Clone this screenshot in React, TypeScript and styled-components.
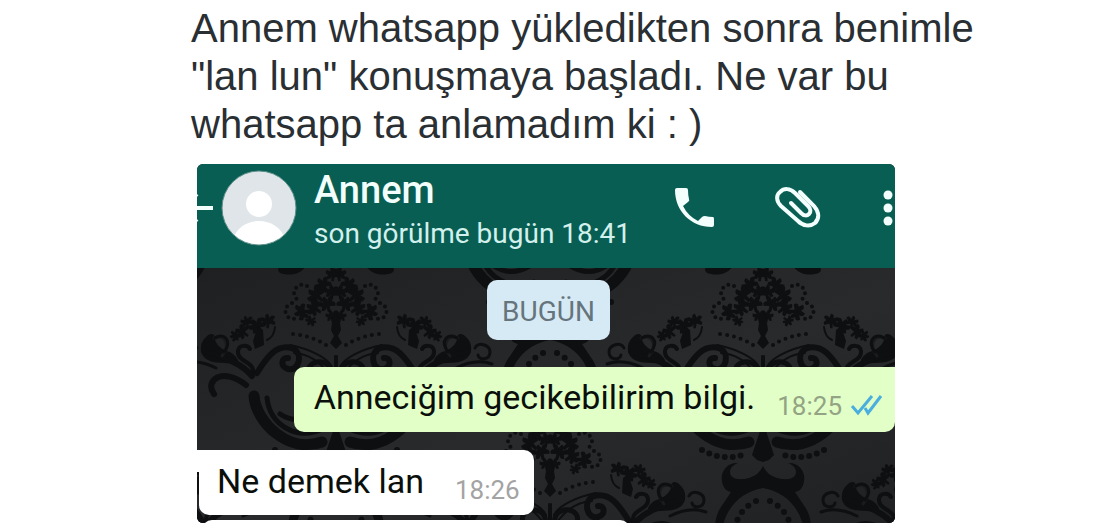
import React from 'react';
import styled, { createGlobalStyle } from 'styled-components';

const GlobalStyle = createGlobalStyle`
  *, *::before, *::after { box-sizing: border-box; }
  body { margin: 0; background: #fff; font-family: Roboto, "Noto Sans", sans-serif; }
`;

const Post = styled.article`
  max-width: 1000px;
  padding: 4px 24px 5px 191px;
`;

const Caption = styled.p`
  margin: 0 0 16px;
  max-width: 784px;
  color: #292f33;
  font: 40px/48px "Liberation Sans", Arial, sans-serif;
`;

const Chat = styled.section`
  position: relative;
  margin-left: 6px;
  max-width: 698px;
  overflow: hidden;
  border-radius: 6px;
  background: #232426;
`;

const Header = styled.header`
  position: relative;
  display: flex;
  align-items: flex-start;
  height: 104px;
  padding-top: 6px;
  background: #095e54;
  color: #f2fffc;
`;

const IconButton = styled.button<{ $width: number }>`
  flex: none;
  width: ${(p) => p.$width}px;
  height: 76px;
  padding: 0;
  border: 0;
  background: none;
  color: inherit;
  svg { display: block; }
`;

const Avatar = styled.svg`
  flex: none;
  width: 76px;
  height: 76px;
`;

const Contact = styled.div`
  flex: 1;
  padding-left: 17px;
  white-space: nowrap;
`;

const Name = styled.h1`
  margin: 0;
  font-size: 38px;
  line-height: 40px;
  font-weight: 500;
`;

const Seen = styled.p`
  margin: 4px 0 0;
  font-size: 28px;
  line-height: 40px;
  color: #d3f1ec;
`;

const Messages = styled.div`
  position: relative;
  height: 255px;
  padding-top: 12px;
  display: flex;
  flex-direction: column;
  overflow: hidden;
`;

const Wallpaper = styled.svg`
  position: absolute;
  top: 0;
  left: 0;
`;

const DayLabel = styled.div`
  position: relative;
  align-self: center;
  height: 60px;
  margin: 0 0 27px 5px;
  padding: 0 15px;
  border-radius: 10px;
  background: #d6eaf6;
  color: #66747c;
  font-size: 28px;
  line-height: 64px;
`;

const Bubble = styled.div`
  position: relative;
  flex: none;
  display: flex;
  align-items: baseline;
  height: 65px;
  color: #0b0f0b;
  font-size: 34px;
  line-height: 60px;
  white-space: nowrap;
`;

const SentBubble = styled(Bubble)`
  align-self: flex-end;
  margin-bottom: 18px;
  padding: 0 12px 0 20px;
  border-radius: 10px 0 10px 10px;
  background: #e1ffc7;
`;

const ReceivedBubble = styled(Bubble)`
  align-self: flex-start;
  margin: 0 0 5px 2px;
  padding: 0 14px 0 18px;
  border-radius: 0 10px 10px 10px;
  background: #fff;
  line-height: 62px;

  &::before {
    content: '';
    position: absolute;
    top: 0;
    left: -2px;
    width: 2px;
    height: 22px;
    background: #fff;
  }
`;

const Time = styled.time<{ $sent?: boolean }>`
  position: relative;
  top: 6px;
  margin-left: ${(p) => (p.$sent ? 22 : 31)}px;
  color: ${(p) => (p.$sent ? '#93a384' : '#a3a3a3')};
  font-size: 26px;
`;

const Ticks = styled.svg`
  align-self: flex-start;
  margin: 26px 0 0 8px;
`;

const NextBubble = styled.div`
  position: relative;
  flex: none;
  width: 428px;
  height: 20px;
  margin-left: 5px;
  border-radius: 10px;
  background: #fff;
`;

/* Leaf sprigs of the bouquet and of the side flower: x, y, rotation, size. */
const sprigs = [
  [3, 6, 0, 8], [13, 17, 30, 9], [4, 24, 0, 8], [20, 27, 50, 10],
  [9, 36, 20, 9], [34, 44, 100, 9], [22, 40, 60, 9], [25, 53, 130, 6], [4, 48, 10, 7],
  [68, 53, 0, 8], [79, 58, 30, 9], [89, 54, 10, 7], [94, 64, 60, 8], [101, 68, 90, 6],
];

/* One half of the damask ornament; the other half is its mirror image. */
const HalfOrnament = () => (
  <g>
    <g fill="#0e0f11">
      {sprigs.map(([x, y, turn, size]) => (
        <use key={`${x} ${y}`} href="#sprig" transform={`translate(${x} ${y}) rotate(${turn}) scale(${size / 10})`} />
      ))}
      <path d="M0 48h3l2 14-3 6 4 7-6 6zM73 62l5-4 5 15-2 8-9-4zM30-3c8 0 14 4 24 0 6 3 5 8-2 9-8 2-19-1-22-9z" />
      <path d="M98 92c6-12 17-6 23-20-1-7 5-8 9-3 7 6 7 17 0 22-9 6-19 2-32 6z" />
      <path d="M0 163h3l8 24-5 5-6 2z" />
      <path d="M0 198q4 9 14 12c12 3 19 0 19-6 0-4-3-7-8-9 10-1 18 8 16 18-1 7-4 10-9 11l8 12c7 9 9 19 8 35l-6 1C41 244 26 225 0 220z" />
    </g>
    <g fill="none" stroke="#0e0f11" strokeLinecap="round">
      <path d="M29 18c6-4 13 1 13 8q-1 5-7 8M44 35c7 3 8 8 5 13q-5 5-12 1" strokeWidth="4" strokeDasharray="0 6" />
      <path d="M10 77Q24 68 43 66" strokeWidth="4" strokeDasharray="0 7" />
      <path d="M4 99C8 90 26 81 46 77M1 106V88M7 106Q22 86 42 85M61 59Q62 69 69 72" strokeWidth="2" />
      <path d="M5 108C2 95 19 89 26 98c6 9-7 17-11 9" strokeWidth="5" />
      <path d="M79 105C69 89 60 76 44 80 32 85 37 104 48 101c8-2 7-12 0-11" strokeWidth="6" />
      <path d="M83 104c-1-11 16-10 15-21-1-7-10-6-12-2" strokeWidth="4" />
      <path d="M84 108C96 94 112 90 132 83M90 117C114 98 132 113 122 126" strokeWidth="6" />
      <path d="M114 88c-9-11-3-22 8-18" strokeWidth="3" stroke="#1a1b1d" />
      <path d="M112 84c-9-12 1-20 9-14M139 80c3-7 15-3 15 4 0 8-11 9-12 3M156 96q-16-6-36 4" strokeWidth="3" />
      <path d="M61 182Q40 194 17 186" strokeWidth="6" strokeDasharray="0 8" />
      <path d="M82 128C80 154 48 186 14 174" strokeWidth="11" />
      <path d="M69 130C66 158 38 172 16 162" strokeWidth="5" />
      <path d="M56 146Q38 158 17 144" strokeWidth="5" />
      <path d="M7 233Q24 241 28 260" strokeWidth="6" strokeDasharray="0 9" />
    </g>
  </g>
);

const columns = [
  [139, 0], [566, 0],
  [-74, 148], [353, 148], [780, 148],
  [-74, -148], [353, -148], [780, -148],
];

const Damask = () => (
  <Wallpaper width="698" height="255" viewBox="0 0 698 255" aria-hidden="true">
    <defs>
      <linearGradient id="shade" x2="1" y2="1">
        <stop stopColor="#1f2022" />
        <stop offset=".55" stopColor="#282a2c" />
        <stop offset="1" stopColor="#202123" />
      </linearGradient>
      <path id="sprig" d="M-1 9L-2 3-8 5Q-11 1-6-1L-9-5Q-5-9-2-4L0-9Q5-8 3-3L8-5Q11 0 6 1L8 5Q4 8 2 3V9Z" />
      <g id="half"><HalfOrnament /></g>
      <g id="ornament">
        <use href="#half" />
        <use href="#half" transform="scale(-1 1)" />
      </g>
    </defs>
    <rect width="698" height="255" fill="url(#shade)" />
    {columns.map(([x, y]) => (
      <use key={`${x} ${y}`} href="#ornament" x={x} y={y} />
    ))}
  </Wallpaper>
);

export default function App() {
  return (
    <>
      <GlobalStyle />
      <Post>
        <Caption>
          Annem whatsapp yükledikten sonra benimle "lan lun" konuşmaya başladı. Ne var bu whatsapp ta anlamadım ki : )
        </Caption>
        <Chat>
          <Header>
            <IconButton $width={24} aria-label="Geri">
              <svg width="24" height="76" fill="none" stroke="currentColor" strokeWidth="4">
                <path d="M16 38H-10M0 24L-14 38L0 52" />
              </svg>
            </IconButton>
            <Avatar viewBox="0 0 76 76" aria-hidden="true">
              <defs><clipPath id="disc"><circle cx="38" cy="38" r="37" /></clipPath></defs>
              <circle cx="38" cy="38" r="37" fill="#dfe5e8" />
              <g fill="#fff" clipPath="url(#disc)">
                <circle cx="38" cy="34" r="13" />
                <path d="M12 70C15 57 27 51 38 51s23 6 26 19v8H12z" />
              </g>
              <circle cx="38" cy="38" r="37" fill="none" stroke="#5d8f88" />
            </Avatar>
            <Contact>
              <Name>Annem</Name>
              <Seen>son görülme bugün 18:41</Seen>
            </Contact>
            <IconButton $width={40} aria-label="Ara">
              <svg width="40" height="76" viewBox="0 0 40 76" fill="currentColor">
                <path d="M3 18H12Q14 18 14 20Q14 25 15 29Q16 31 14 32L9 36Q14 46 24 51L28 47Q29 46 31 46Q35 47 39 47Q40 47 40 49V55Q40 57 38 57C17 57 1 41 1 20Q1 18 3 18Z" />
              </svg>
            </IconButton>
            <IconButton $width={108} aria-label="Ekle">
              <svg width="108" height="76" viewBox="-2 0 108 76" fill="none" stroke="currentColor" strokeWidth="4" strokeLinecap="round">
                <path d="M84 22L98 36C104 43 103 49 99 53C94 57 87 56 82 51L65 36C60 31 60 25 64 22C68 18 74 18 79 23L92 36C95 39 95 42 93 44C91 46 88 46 85 43L75 33" />
              </svg>
            </IconButton>
            <IconButton $width={73} aria-label="Diğer seçenekler">
              <svg width="73" height="76" viewBox="0 0 73 76" fill="currentColor">
                <circle cx="66" cy="25" r="4.5" />
                <circle cx="66" cy="38" r="4.5" />
                <circle cx="66" cy="51" r="4.5" />
              </svg>
            </IconButton>
          </Header>
          <Messages>
            <Damask />
            <DayLabel>BUGÜN</DayLabel>
            <SentBubble>
              Anneciğim gecikebilirim bilgi.
              <Time $sent>18:25</Time>
              <Ticks width="33" height="24" viewBox="0 0 33 24" fill="none" stroke="#4aaede" strokeWidth="3" aria-label="Okundu" role="img">
                <path d="M2 13L8 20L22 3M15 15L18 20L31 3" />
              </Ticks>
            </SentBubble>
            <ReceivedBubble>
              Ne demek lan
              <Time>18:26</Time>
            </ReceivedBubble>
            <NextBubble />
          </Messages>
        </Chat>
      </Post>
    </>
  );
}
